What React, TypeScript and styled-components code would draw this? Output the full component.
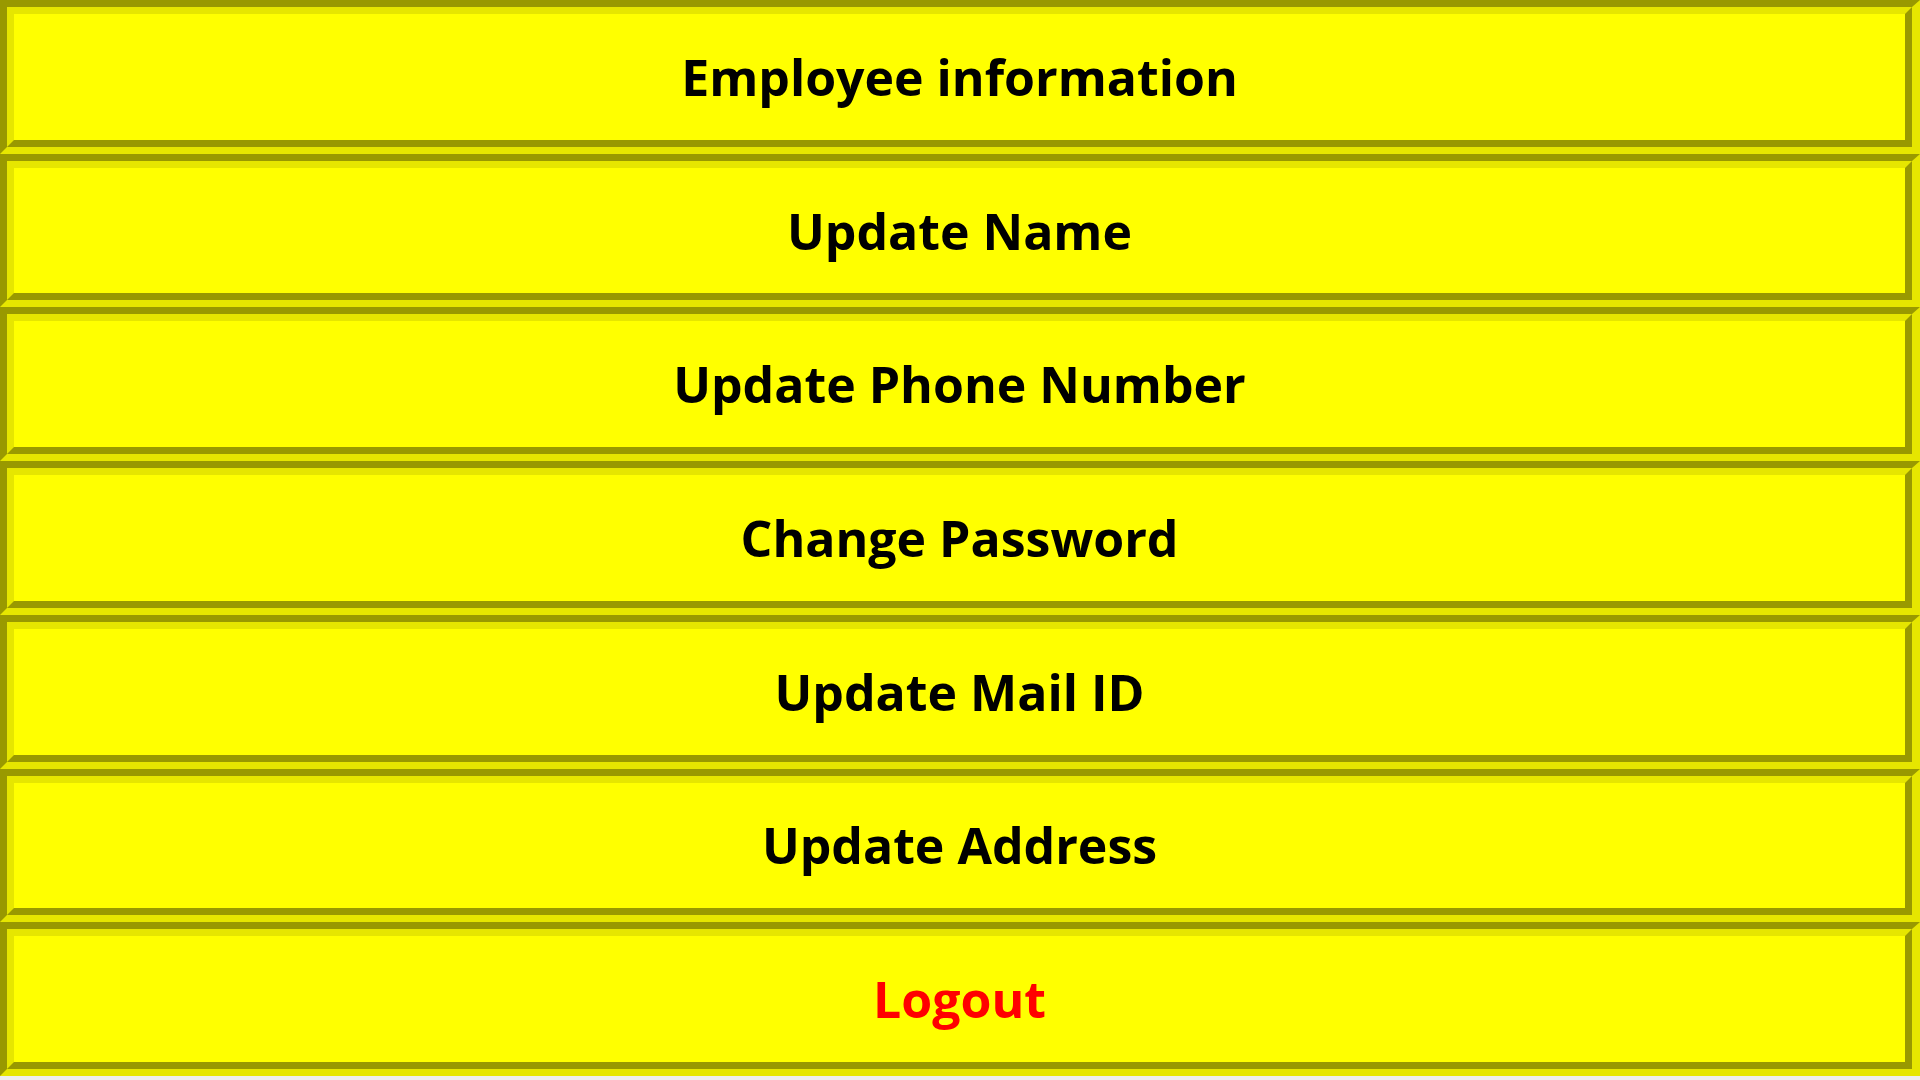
import React from 'react';
import styled, { createGlobalStyle } from 'styled-components';

const GlobalStyle = createGlobalStyle`
    html, body {
        margin: 0;
        padding: 0;
        background: #eeeeee;
    }
`

const items = [
    'Employee information',
    'Update Name',
    'Update Phone Number',
    'Change Password',
    'Update Mail ID',
    'Update Address',
];

const App = () => {
    return (
        <>
            <GlobalStyle />
            <Menu>
                {items.map(label => (
                    <MenuButton key={label}>
                        <Inner>
                            <Label>{label}</Label>
                        </Inner>
                    </MenuButton>
                ))}
                <MenuButton>
                    <Inner>
                        <Label danger>Logout</Label>
                    </Inner>
                </MenuButton>
            </Menu>
        </>
    )
}

export default App;

const Menu = styled.div`
    display: flex;
    flex-direction: column;
    width: 1920px;
    height: 1076px;
`

const MenuButton = styled.button`
    flex: 1;
    display: flex;
    padding: 0;
    margin: 0;
    background: #ffff00;
    border-style: solid;
    border-width: 7px 8px 7px 7px;
    border-color: #999900 #e6e600 #e6e600 #999900;
    cursor: pointer;
`

const Inner = styled.div`
    flex: 1;
    display: flex;
    align-items: center;
    justify-content: center;
    border-style: solid;
    border-width: 7px;
    border-color: #e6e600 #999900 #999900 #e6e600;
`

const Label = styled.span<{ danger?: boolean }>`
    font-family: 'Open Sans', 'Lato', sans-serif;
    font-weight: 700;
    font-size: 50px;
    font-variant-ligatures: none;
    color: ${p => (p.danger ? '#ff0000' : '#000000')};
`
